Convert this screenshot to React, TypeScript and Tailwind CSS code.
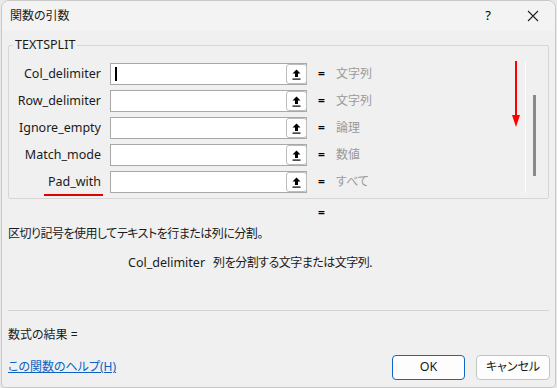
import React from "react";

const font = { fontFamily: '"Noto Sans", "Noto Sans CJK JP", sans-serif' };

const args = [
  { name: "Col_delimiter", type: "文字列", caret: true },
  { name: "Row_delimiter", type: "文字列" },
  { name: "Ignore_empty", type: "論理" },
  { name: "Match_mode", type: "数値" },
  { name: "Pad_with", type: "すべて", mark: true },
];

function RefIcon() {
  return (
    <svg width="9" height="11" viewBox="0 0 9 11">
      <path d="M4.5 0.5 L8.5 4.5 L6 4.5 L6 8 L3 8 L3 4.5 L0.5 4.5 Z" fill="#000" />
      <rect x="0.5" y="9.5" width="8" height="1.2" fill="#000" />
    </svg>
  );
}

function ArgRow({ a }: { a: (typeof args)[number] }) {
  return (
    <div className="flex items-center h-[22px]">
      <div className="relative w-[92px] text-right text-[12.5px] text-[#1a1a1a]">
        {a.name}
        {a.mark && <div className="absolute left-[35px] right-[-2px] bottom-[-5px] h-[2px] bg-[#e00000]" />}
      </div>
      <div className="ml-[9px] w-[197px] h-[22px] border border-[#a8a8a8] bg-white flex items-center justify-between">
        <div className="pl-[4px]">{a.caret && <div className="w-[2px] h-[14px] bg-black" />}</div>
        <div className="w-[21px] h-[20px] mr-[-1px] border border-[#bcbcbc] rounded-[3px] bg-white flex items-center justify-center">
          <RefIcon />
        </div>
      </div>
      <div className="ml-[11px] w-[8px] text-[12px] text-black font-bold">=</div>
      <div className="ml-[10px] text-[12px] text-[#9a9a9a]">{a.type}</div>
    </div>
  );
}

export default function App() {
  return (
    <div className="w-[557px] h-[388px] bg-[#e9e9e9] pl-[1px] pr-[1px] [font-feature-settings:'palt']" style={font}>
      <div className="h-full bg-[#f0f0f0] border border-[#c8c8c8] rounded-t-[8px] rounded-b-[4px] flex flex-col overflow-hidden">
        <div className="h-[30px] bg-[#f3f3f3] flex items-center pl-[8px] shrink-0">
          <div className="text-[12px] text-[#1a1a1a] flex-1">関数の引数</div>
          <div className="w-[20px] text-center text-[13px] mr-[29px]">?</div>
          <svg width="12" height="12" viewBox="0 0 12 12" className="mr-[16px]">
            <path d="M1 1 L11 11 M11 1 L1 11" stroke="#222" strokeWidth="1.1" />
          </svg>
        </div>
        <div className="relative mx-[6px] mt-[14px] h-[154px] border border-[#d6d6d6] rounded-[2px]">
          <div className="absolute left-[4px] top-[-9px] px-[2px] bg-[#f0f0f0] text-[12.5px] leading-[16px] text-[#1a1a1a]">
            TEXTSPLIT
          </div>
          <div className="flex">
            <div className="flex flex-col gap-[5px] pt-[17px]">
              {args.map((a) => (
                <ArgRow key={a.name} a={a} />
              ))}
            </div>
            <div className="ml-auto mr-[22px] pt-[15px] flex items-start gap-[5px]">
              <svg width="8" height="66" viewBox="0 0 8 66">
                <rect x="3" y="0" width="2" height="58" fill="#ff0000" />
                <path d="M0 54 L8 54 L4 66 Z" fill="#ff0000" />
              </svg>
              <div className="mt-[1px] w-[1px] h-[131px] bg-white relative">
                <div className="absolute left-[8px] top-[33px] w-[3px] h-[81px] bg-[#8a8a8a]" />
              </div>
            </div>
          </div>
        </div>
        <div className="pl-[316px] mt-[6px] text-[12px] font-bold leading-[16px]">=</div>
        <div className="pl-[6px] mt-[4px] text-[12px] text-[#1a1a1a] tracking-[-0.5px]">
          区切り記号を使用してテキストを行または列に分割。
        </div>
        <div className="pl-[126px] mt-[11px] text-[12px] text-[#1a1a1a] flex gap-[8px]">
          <span className="text-[12.5px]">Col_delimiter</span>
          <span className="tracking-[-0.5px]">列を分割する文字または文字列.</span>
        </div>
        <div className="mx-[6px] mt-[37px] h-[1px] bg-[#d4d4d4]" />
        <div className="pl-[6px] mt-[15px] text-[12px] text-[#1a1a1a]">数式の結果 =</div>
        <div className="flex items-center pl-[6px] mt-[11px]">
          <a className="text-[12px] text-[#0b62c4] underline flex-1">この関数のヘルプ(H)</a>
          <button className="w-[73px] h-[25px] border border-[#1067c5] rounded-[4px] bg-[#fdfdfd] text-[12.5px] text-[#1a1a1a]">
            OK
          </button>
          <button className="ml-[11px] mr-[5px] w-[74px] h-[25px] border border-[#c4c4c4] rounded-[4px] bg-[#fdfdfd] text-[12px] text-[#1a1a1a]">
            キャンセル
          </button>
        </div>
      </div>
    </div>
  );
}
